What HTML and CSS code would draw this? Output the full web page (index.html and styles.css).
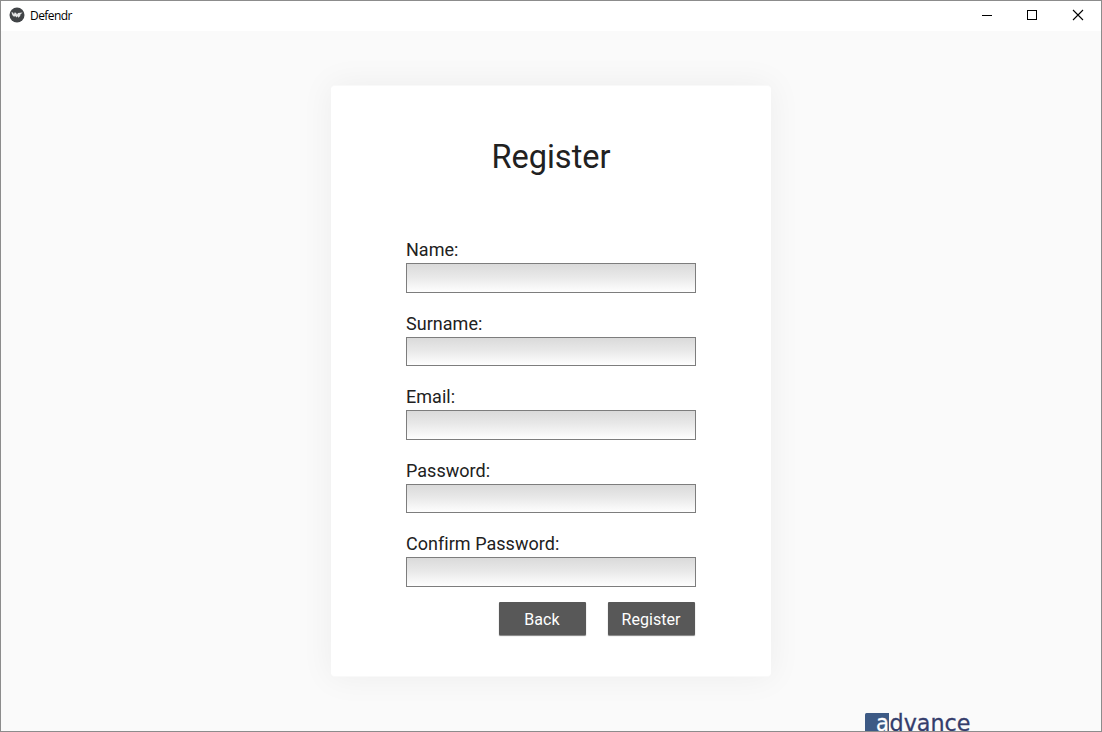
FILE: index.html
```html
<!DOCTYPE html>
<html lang="en">
<head>
<meta charset="utf-8">
<title>Defendr</title>
<link rel="stylesheet" href="styles.css">
</head>
<body>
<div class="window">
  <header class="titlebar">
    <svg class="app-icon" width="16" height="16" viewBox="0 0 16 16"><circle cx="8" cy="8" r="7.5" fill="#414447"/><path d="M2.4 5.2 4 5.4 5 7.6 5.5 5.4 7 5.8 8 7.4 9 6 13.6 5.4 11.4 7.6 11.2 9 9.4 10.8 8.6 9.2 7.2 10.4 6.4 9 5 9.8 3.4 8.2z" fill="#e4e5e6"/></svg>
    <span class="app-name">Defendr</span>
    <div class="controls">
      <svg width="12" height="12" viewBox="0 0 12 12"><path d="M2 6.5h10" stroke="#000"/></svg>
      <svg width="12" height="12" viewBox="0 0 12 12" shape-rendering="crispEdges"><path d="M1.5 1.5h9v9h-9z" fill="none" stroke="#000"/></svg>
      <svg width="12" height="12" viewBox="0 0 12 12"><path d="M1 1l10 10M11 1L1 11" stroke="#000" stroke-width="1.1"/></svg>
    </div>
  </header>
  <main class="content">
    <form class="card">
      <h1 class="heading">Register</h1>
      <label class="field"><span class="label">Name:</span><input class="input" type="text"></label>
      <label class="field"><span class="label">Surname:</span><input class="input" type="text"></label>
      <label class="field"><span class="label">Email:</span><input class="input" type="text"></label>
      <label class="field"><span class="label">Password:</span><input class="input" type="password"></label>
      <label class="field"><span class="label">Confirm Password:</span><input class="input" type="password"></label>
      <div class="actions">
        <button class="button" type="button">Back</button>
        <button class="button" type="button">Register</button>
      </div>
    </form>
    <svg class="brand" width="108" height="19" viewBox="0 0 108 19">
      <path d="M0 2.5Q0 1 1.5 1H24v18H0z" fill="#3d5a85"/>
      <text class="brand-text" x="11" y="18.6" fill="#fff" stroke="#fff" stroke-width=".3" textLength="13" lengthAdjust="spacingAndGlyphs">a</text>
      <text class="brand-text" x="24.5" y="18.6" fill="#343d6c" stroke="#343d6c" stroke-width=".3" textLength="81" lengthAdjust="spacingAndGlyphs">dvance</text>
    </svg>
  </main>
</div>
</body>
</html>
```
FILE: styles.css
```css
* { box-sizing: border-box; }
body { margin: 0; font-family: Roboto, sans-serif; color: #212121; }
.window {
  width: 1102px;
  height: 732px;
  display: flex;
  flex-direction: column;
  overflow: hidden;
  border: 1px solid #8c8c8c;
  background: #fafafa;
}
.titlebar {
  height: 30px;
  flex: none;
  display: flex;
  align-items: center;
  padding: 0 17px 2px 8px;
  background: #fff;
}
.app-icon { margin-right: 5px; }
.app-name { font: 12px/16px "Open Sans", sans-serif; color: #000; margin-top: 2px; letter-spacing: -0.55px; }
.controls { margin-left: auto; display: flex; gap: 34px; }
.content {
  flex: 1;
  display: flex;
  flex-direction: column;
  align-items: center;
  padding-top: 54px;
}
.card {
  width: 440px;
  height: 592px;
  flex: none;
  padding: 47px 75px 0;
  border-radius: 4px;
  border-top: 1px solid #f9f9f9;
  border-bottom: 1px solid #f9f9f9;
  background: #fff;
  box-shadow: 0 0 32px 2px rgba(0, 0, 0, 0.05);
}
.heading {
  height: 104px;
  margin: 0;
  font-size: 32.5px;
  line-height: 48px;
  font-weight: 400;
  text-align: center;
}
.field { display: block; height: 73.5px; }
.label { display: block; height: 26px; font-size: 18px; line-height: 26px; letter-spacing: 0.03px; }
.input {
  display: block;
  width: 290px;
  height: 29.5px;
  padding: 0 6px;
  border: 1px solid #7d7d7d;
  border-radius: 0;
  background: linear-gradient(#dadada, #e8e8e8 45%, #fefefe);
  outline: none;
}
.actions { display: flex; justify-content: flex-end; gap: 22px; margin-top: -3px; padding-right: 1px; }
.button {
  width: 87px;
  height: 33px;
  padding: 1px 1px 0 0;
  border: 0;
  border-radius: 1px;
  background: #585858;
  color: #fff;
  font: 16px/33px Roboto, sans-serif;
  letter-spacing: 0.05px;
  box-shadow: 0 1px 1px rgba(0, 0, 0, 0.5);
}
.brand { flex: none; margin: 35px 0 0 864px; align-self: flex-start; }
.brand-text { font: 23.5px "DejaVu Sans", sans-serif; }
```
